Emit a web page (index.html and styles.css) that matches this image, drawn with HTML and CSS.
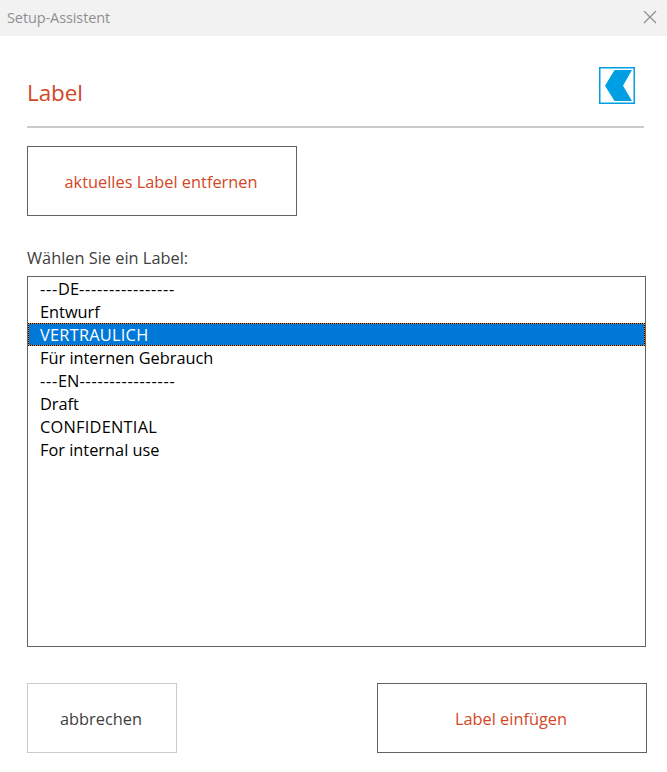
FILE: index.html
```html
<!DOCTYPE html>
<html lang="de">
<head>
    <meta charset="UTF-8">
    <meta name="viewport" content="width=device-width, initial-scale=1.0">
    <title>Setup-Assistent</title>
    <link rel="stylesheet" href="styles.css">
</head>
<body>
    <div class="titlebar">
        <span class="window-title">Setup-Assistent</span>
        <svg class="close" width="14" height="14" viewBox="0 0 14 14">
            <path d="M1 0 L13 12 M13 0 L1 12" stroke="#8c8c8c" stroke-width="1.2" fill="none"/>
        </svg>
    </div>
    <div class="content">
        <div class="header">
            <h1>Label</h1>
            <svg class="logo" width="36" height="37" viewBox="0 0 36 37">
                <rect x="0.75" y="0.75" width="34.5" height="35.5" fill="#fff" stroke="#009ee3" stroke-width="1.5"/>
                <path d="M15.5 3 H33 L24 18.7 L33 34 H15.5 L6 18.7 Z" fill="#009ee3"/>
            </svg>
        </div>
        <button class="btn btn-wide remove">aktuelles Label entfernen</button>
        <div class="caption">Wählen Sie ein Label:</div>
        <ul class="list">
            <li><span class="dashes">---</span>DE<span class="dashes">----------------</span></li>
            <li>Entwurf</li>
            <li class="selected"><span class="caps">VERTRAULICH</span></li>
            <li>Für internen Gebrauch</li>
            <li><span class="dashes">---</span>EN<span class="dashes">----------------</span></li>
            <li>Draft</li>
            <li><span class="caps">CONFIDENTIAL</span></li>
            <li>For internal use</li>
        </ul>
        <div class="footer">
            <button class="btn cancel">abbrechen</button>
            <button class="btn btn-wide">Label einfügen</button>
        </div>
    </div>
</body>
</html>
```

FILE: styles.css
```css
* {
    box-sizing: border-box;
}
body {
    margin: 0;
    height: 772px;
    background: #fff;
    font-family: "Open Sans", sans-serif;
    font-size: 16.35px;
    color: #404040;
    overflow: hidden;
}
.titlebar {
    display: flex;
    align-items: center;
    justify-content: space-between;
    height: 36px;
    padding: 0 10px 0 7px;
    background: #f2f2f2;
}
.window-title {
    padding-bottom: 2px;
    font-size: 14.5px;
    letter-spacing: -0.1px;
    color: #8f8f8f;
}
.content {
    padding: 0 20px 0 27px;
}
.header {
    display: flex;
    align-items: center;
    justify-content: space-between;
    width: 617px;
    height: 92px;
    padding: 9px 9px 0 0;
    border-bottom: 2px solid #cbcbcb;
}
h1 {
    margin: 15px 0 0;
    font-size: 22.5px;
    font-weight: normal;
    line-height: 30px;
    letter-spacing: -0.1px;
    color: #d24726;
}
.btn {
    display: block;
    height: 70px;
    padding: 2px 2px 0 0;
    border: 1px solid #626262;
    background: #fff;
    font: inherit;
    color: #d24726;
}
.btn-wide {
    width: 270px;
}
.remove {
    margin-top: 18px;
}
.caption {
    margin-top: 30px;
    height: 30px;
    line-height: 24px;
}
.list {
    margin: 0;
    padding: 0;
    width: 619px;
    height: 371px;
    border: 1px solid #626262;
    list-style: none;
    color: #000;
}
.list li {
    height: 23px;
    padding-left: 12px;
    line-height: 24px;
}
.dashes {
    letter-spacing: 0.75px;
}
.caps {
    letter-spacing: 0.25px;
}
.list .selected {
    background: #0078d7;
    color: #fff;
    outline: 1px dotted #000;
    outline-offset: -1px;
    box-shadow: inset 0 0 0 1px #ff8728;
}
.footer {
    display: flex;
    justify-content: space-between;
    margin-top: 36px;
}
.cancel {
    width: 150px;
    border-color: #cbcbcb;
    color: #404040;
}
```
